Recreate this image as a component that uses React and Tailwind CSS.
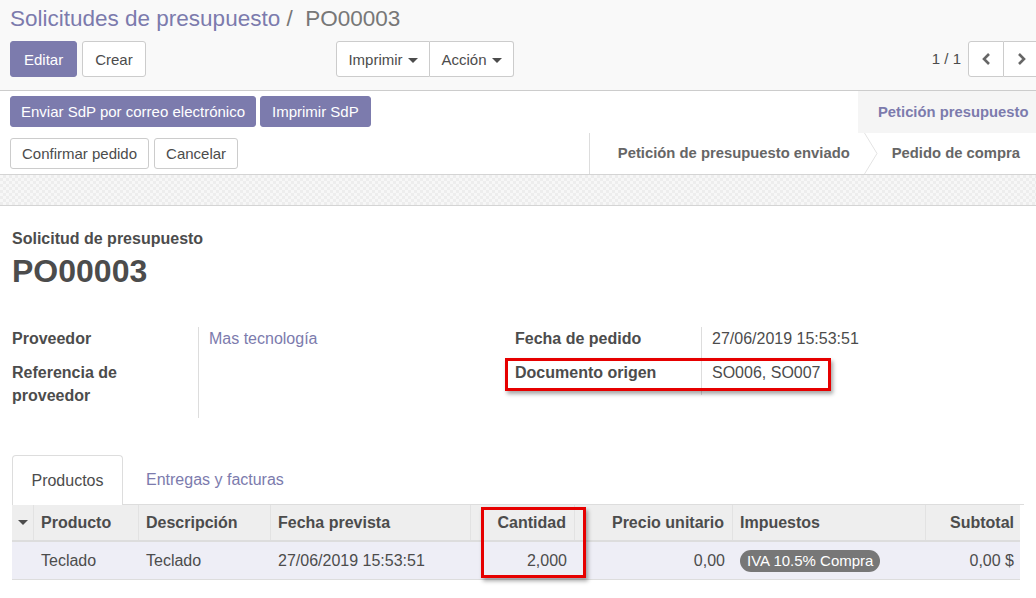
const purple = "bg-[#7c7bad]";

function Btn({ children, primary, className = "" }) {
  return (
    <button
      className={`rounded-[3px] border text-[15px] leading-none ${
        primary ? `${purple} border-[#7c7bad] text-white` : "bg-white border-[#ccc] text-[#4c4c4c]"
      } ${className}`}
    >
      {children}
    </button>
  );
}

function Caret() {
  return <span className="inline-block ml-[5px] align-middle border-x-[5px] border-x-transparent border-t-[5px] border-t-[#4c4c4c]" />;
}

function Field({ label, children, valueClass = "" }) {
  return (
    <div className="flex">
      <div className="w-[187px] shrink-0 pb-[11px] pr-4 font-bold text-[16px] leading-[23px] text-[#4c4c4c] border-r border-[#ddd]">
        {label}
      </div>
      <div className={`pl-[10px] pb-[11px] text-[16px] leading-[23px] ${valueClass}`}>{children}</div>
    </div>
  );
}

export default function App() {
  const cols = "grid grid-cols-[22px_105px_132px_200px_104px_158px_193px_1fr]";
  return (
    <div className="w-[1036px] h-[598px] overflow-hidden bg-white font-['Liberation_Sans',Arial,sans-serif] text-[#4c4c4c]">
      {/* control panel */}
      <div className="bg-[#f9f9f9] border-b border-[#ccc] h-[91px] pl-[10px] pr-[10px]">
        <div className="h-[37px] flex items-center text-[22.5px] whitespace-pre">
          <span className="text-[#7c7bad]">Solicitudes de presupuesto</span>
          <span className="text-[#777]"> /  PO00003</span>
        </div>
        <div className="flex items-center h-[36px] mt-[4px]">
          <div className="w-[326px] flex gap-[5px] h-full">
            <Btn primary className="px-[13px]">Editar</Btn>
            <Btn className="px-[12px]">Crear</Btn>
          </div>
          <div className="flex h-full">
            <Btn className="w-[94px] rounded-r-none">Imprimir<Caret /></Btn>
            <Btn className="w-[84px] rounded-l-none border-l-0">Acción<Caret /></Btn>
          </div>
          <div className="ml-auto flex items-center h-full -mr-[14px]">
            <span className="text-[15px] mr-[7px]">1 / 1</span>
            <div className="flex h-full">
              <button className="w-[36px] h-full border border-[#ccc] rounded-l-[3px] bg-white flex items-center justify-center">
                <svg width="10" height="14" viewBox="0 0 10 14"><path d="M8 2 L3 7 L8 12" fill="none" stroke="#666" strokeWidth="2.6" /></svg>
              </button>
              <button className="w-[36px] h-full border border-l-0 border-[#ccc] rounded-r-[3px] bg-white flex items-center justify-center">
                <svg width="10" height="14" viewBox="0 0 10 14"><path d="M2 2 L7 7 L2 12" fill="none" stroke="#666" strokeWidth="2.6" /></svg>
              </button>
            </div>
          </div>
        </div>
      </div>

      {/* status bar */}
      <div className="bg-white">
        <div className="flex h-[42px]">
          <div className="flex gap-[4px] pl-[10px] pt-[5px]">
            <Btn primary className="h-[31px] px-[10px]">Enviar SdP por correo electrónico</Btn>
            <Btn primary className="h-[31px] px-[11px]">Imprimir SdP</Btn>
          </div>
          <div className="ml-auto w-[178px] bg-[#f5f5f5] flex items-center pl-[20px] text-[14.8px] font-bold text-[#7c7bad]">
            Petición presupuesto
          </div>
        </div>
        <div className="flex h-[41px]">
          <div className="flex gap-[5px] pl-[10px] pt-[5px]">
            <Btn className="h-[31px] px-[11px]">Confirmar pedido</Btn>
            <Btn className="h-[31px] px-[11px]">Cancelar</Btn>
          </div>
          <div className="ml-auto flex items-center border-l border-[#ddd] text-[14.8px] font-bold text-[#666]">
            <span className="pl-[28px] pr-[14px]">Petición de presupuesto enviado</span>
            <svg width="14" height="41" viewBox="0 0 14 41" className="shrink-0">
              <path d="M0.5 0 L13 20.5 L0.5 41" fill="none" stroke="#e3e3e3" strokeWidth="1" />
            </svg>
            <span className="pl-[14px] pr-[16px]">Pedido de compra</span>
          </div>
        </div>
      </div>

      {/* band */}
      <div className="h-[32px] border-y border-[#d4d4d4] bg-[#f3f3f3] bg-[image:repeating-conic-gradient(#ededed_0_25%,#f7f7f7_0_50%)] bg-size-[6px_6px]" />

      {/* sheet */}
      <div className="px-[12px]">
        <div className="mt-[23px] text-[16px] font-bold leading-[20px]">Solicitud de presupuesto</div>
        <div className="mt-[4px] text-[32px] font-bold leading-[37px] text-[#4c4c4c]">PO00003</div>

        <div className="mt-[37px] flex">
          <div className="w-[503px] pl-0">
            <Field label="Proveedor" valueClass="text-[#7c7bad]">Mas tecnología</Field>
            <Field label={<>Referencia de<br />proveedor</>}>{"\u00a0"}</Field>
          </div>
          <div className="relative">
            <Field label="Fecha de pedido">27/06/2019 15:53:51</Field>
            <Field label="Documento origen">SO006, SO007</Field>
            <div className="absolute left-[-10px] top-[31px] w-[326px] h-[33px] border-[3px] border-[#e60000] shadow-[2px_3px_4px_rgba(0,0,0,0.35)]" />
          </div>
        </div>

        {/* tabs */}
        <div className="mt-[37px] flex h-[50px] border-b border-[#ddd]">
          <div className="w-[111px] border border-b-0 border-[#ddd] rounded-t-[4px] bg-white flex items-center justify-center text-[16px] -mb-px">
            Productos
          </div>
          <div className="pl-[23px] flex items-center text-[16px] text-[#7c7bad]">Entregas y facturas</div>
        </div>

        {/* table */}
        <div className="relative w-[1008px] text-[16px]">
          <div className={`${cols} h-[37px] bg-[#eeeeee] border-b-2 border-[#dddddd] font-bold items-stretch`}>
            <div className="flex items-center justify-center border-r border-[#e2e2e2]">
              <span className="border-x-[5px] border-x-transparent border-t-[5px] border-t-[#4c4c4c]" />
            </div>
            <div className="flex items-center pl-[7px] border-r border-[#e2e2e2]">Producto</div>
            <div className="flex items-center pl-[7px] border-r border-[#e2e2e2]">Descripción</div>
            <div className="flex items-center pl-[7px] border-r border-[#e2e2e2]">Fecha prevista</div>
            <div className="flex items-center justify-end pr-[8px] border-r border-[#e2e2e2]">Cantidad</div>
            <div className="flex items-center justify-end pr-[8px] border-r border-[#e2e2e2]">Precio unitario</div>
            <div className="flex items-center pl-[7px] border-r border-[#e2e2e2]">Impuestos</div>
            <div className="flex items-center justify-end pr-[6px]">Subtotal</div>
          </div>
          <div className={`${cols} h-[38px] bg-[#eeeef6] border-b border-[#dddddd] items-center`}>
            <div />
            <div className="pl-[7px]">Teclado</div>
            <div className="pl-[7px]">Teclado</div>
            <div className="pl-[7px]">27/06/2019 15:53:51</div>
            <div className="text-right pr-[8px]">2,000</div>
            <div className="text-right pr-[8px]">0,00</div>
            <div className="pl-[7px]">
              <span className="inline-block rounded-full bg-[#777] text-white text-[15px] leading-[22px] px-[7px]">IVA 10.5% Compra</span>
            </div>
            <div className="text-right pr-[6px]">0,00 $</div>
          </div>
          <div className="absolute left-[469px] top-[2px] w-[105px] h-[71px] border-[3px] border-[#e60000] shadow-[2px_3px_4px_rgba(0,0,0,0.35)]" />
        </div>
      </div>
    </div>
  );
}
